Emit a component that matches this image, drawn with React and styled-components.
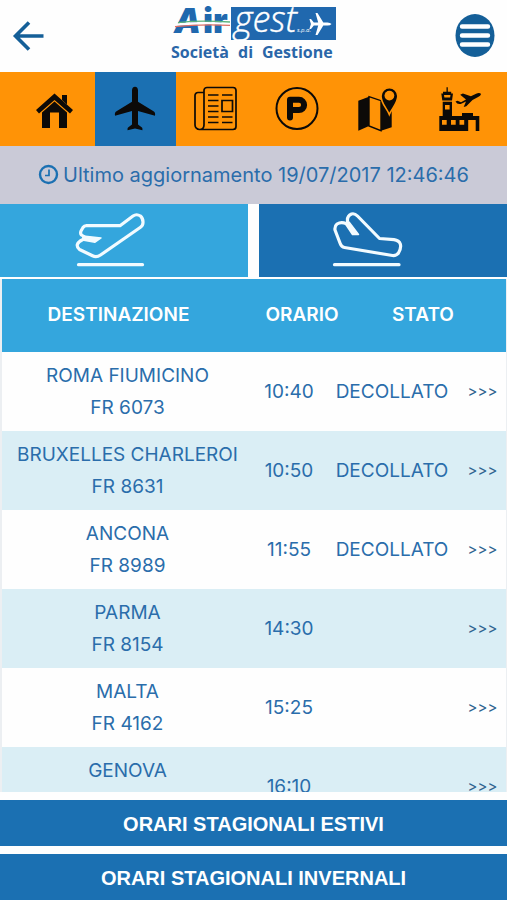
import React from "react";
import styled, { createGlobalStyle } from "styled-components";

const color = {
  blue: "#1b70b2",
  sky: "#34a6dd",
  orange: "#ff9306",
  ink: "#2a6dab",
  deep: "#145f98",
  stripe: "#daeef5",
};

const GlobalStyle = createGlobalStyle`
  *, *::before, *::after { box-sizing: border-box; }
  html, body { margin: 0; padding: 0; }
  body { background: #fefefe; font-family: Inter, "Open Sans", sans-serif; }
  button { font: inherit; border: 0; margin: 0; padding: 0; cursor: pointer; }
`;

const Page = styled.div`
  display: flex;
  flex-direction: column;
  height: 100vh;
  overflow: hidden;
`;

const Header = styled.header`
  flex: none;
  display: grid;
  grid-template-columns: 1fr auto 1fr;
  align-items: center;
  padding: 0 12px;
  height: 72px;
`;

const HeaderButton = styled.button`
  display: flex;
  justify-self: ${(p) => (p.$end ? "end" : "start")};
  background: none;
`;

const Logo = styled.svg`
  display: block;
  overflow: visible;
  font-family: "Open Sans", sans-serif;
`;

const Nav = styled.nav`
  flex: none;
  display: grid;
  grid-template-columns: repeat(6, 1fr);
  height: 74px;
  padding: 0 7px 0 14px;
  background: ${color.orange};
`;

const NavLink = styled.a`
  display: flex;
  align-items: center;
  justify-content: center;
  color: #0c0a08;
  background: ${(p) => (p.$active ? color.blue : "transparent")};
`;

const NavDrawing = styled.svg`
  overflow: visible;
`;

const Updated = styled.p`
  flex: none;
  display: flex;
  align-items: center;
  justify-content: center;
  gap: 4px;
  height: 58px;
  margin: 0;
  background: #cacad7;
  color: ${color.ink};
  font-size: 20px;
`;

const Tabs = styled.div`
  flex: none;
  display: grid;
  grid-template-columns: 1fr 1fr;
  gap: 11px;
  height: 73px;
`;

const Tab = styled.button`
  display: flex;
  align-items: center;
  justify-content: center;
  padding-right: ${(p) => (p.$active ? "26px" : "30px")};
  background: ${(p) => (p.$active ? color.sky : color.blue)};
`;

const Board = styled.div`
  flex: 1 1 0;
  min-height: 0;
  overflow-y: auto;
  scrollbar-width: none;
  margin-top: 2px;
  padding: 0 1px 0 2px;
  background: #eceff2;
`;

const Table = styled.table`
  display: block;
  width: 100%;
  color: ${color.ink};
  font-size: 19px;
  line-height: 32px;
`;

const TableHead = styled.thead`
  display: block;
  background: ${color.sky};
  color: #fff;
`;

const TableBody = styled.tbody`
  display: block;
`;

const HeadRow = styled.tr`
  display: grid;
  grid-template-columns: 233fr 134fr 108fr 29fr;
  align-items: center;
  height: 73px;
  padding-bottom: 2px;
`;

const HeadCell = styled.th`
  padding: 0;
  font-weight: 600;
  text-align: center;
`;

const FlightRow = styled.tr`
  display: grid;
  grid-template-columns: 251fr 72fr 134fr 47fr;
  align-items: center;
  height: 79px;
  background: #fefefe;

  &:nth-child(even) { background: ${color.stripe}; }
`;

const Cell = styled.td`
  padding: 0;
  text-align: center;
  white-space: nowrap;
`;

const Line = styled.span`
  display: block;
`;

const More = styled.a`
  color: #33658f;
  font-size: 15px;
  text-decoration: none;
`;

const Seasons = styled.footer`
  flex: none;
  display: grid;
  gap: 8px;
  padding-top: 8px;
`;

const SeasonButton = styled.button`
  height: 46px;
  padding-top: 2px;
  background: ${color.blue};
  color: #fff;
  font-family: "Liberation Sans", Arial, sans-serif;
  font-size: 20px;
  font-weight: 700;
`;

const BackIcon = () => (
  <svg width="32" height="32" viewBox="0 0 32 32" fill="none" stroke={color.deep} strokeWidth="3.6">
    <path d="M17 2.500 3.500 16 17 29.500M3.500 16H31.500" />
  </svg>
);

const MenuIcon = () => (
  <svg width="40" height="44" viewBox="0 0 40 44">
    <ellipse cx="20" cy="21.500" rx="19.500" ry="21.500" fill={color.deep} />
    <path d="M7 12.500H33M7 21.500H33M7 30.500H33" stroke="#fff" strokeWidth="4.400" strokeLinecap="round" />
  </svg>
);

const AirgestLogo = () => (
  <Logo width="168" height="62" viewBox="0 0 168 62" role="img" aria-label="Airgest Società di Gestione">
    <g fontFamily="Inter" fontWeight="900" fontSize="34" fill="#2068ae">
      <text x="4" y="28" fontStyle="italic">A</text>
      <text x="33" y="28">ir</text>
    </g>
    <path d="M7 18.200Q30 16.200 60 17.600V20Q30 18.600 5 21Z" fill="#fff" />
    <path d="M8 17.600Q30 15 60 17" fill="none" stroke="#5bb37c" strokeWidth="1.300" />
    <path d="M5 21.600Q30 19 60 20.400" fill="none" stroke="#dd6f66" strokeWidth="1.300" />
    <rect x="61" y="2" width="105" height="33" fill="#2068ae" />
    <text x="64" y="27" fontWeight="300" fontStyle="italic" fontSize="36" fill="#fff" stroke="#fff" strokeWidth="0.400">gest</text>
    <text x="127" y="27" fontSize="6" fontStyle="italic" fill="#fff">s.p.a.</text>
    <path
      fill="#fff"
      d="M161.500 19q-1.200-1.500-4-1.500h-4.200L147.500 8h-2l2.700 9.500h-4.400L141 14h-1.600l1.500 5-1.500 5h1.600l2.800-3.500h4.400L145.500 30h2l5.800-9.500h4.200q2.800 0 4-1.500Z"
    />
    <g fontWeight="700" fontSize="16" fill="#2a66a8">
      <text x="1" y="53">Società</text>
      <text x="68" y="53">di</text>
      <text x="92" y="53">Gestione</text>
    </g>
  </Logo>
);

const NavSvg = ({ children }) => (
  <NavDrawing width="44" height="46" viewBox="1 0 44 46" fill="currentColor" aria-hidden="true">
    {children}
  </NavDrawing>
);

const HomeIcon = () => (
  <NavSvg>
    <path d="M30 9h5v9.500l-5-4.500Z" />
    <path d="M22.500 7.500 41 24l-3 3.500L22.500 14 7 27.500 4 24Z" />
    <path d="M22.500 15.500 35 26.500V42h-8V26.500h-9V42H10V26.500Z" />
  </NavSvg>
);

const PlaneIcon = () => (
  <NavSvg>
    <path d="M22 .8c-1.900 0-3 1.500-3 3.800v11.200L3.500 25.200C2 26.200 1.600 27.400 2 29.800L19 25v13.500l-3.600 2.800c-.9.800-1 1.700-.8 3L22 42.500l7.400 1.800c.2-1.300.1-2.200-.8-3L25 38.500V25l17 4.800c.4-2.400 0-3.600-1.500-4.600L25 15.800V4.600C25 2.300 23.900.8 22 .8Z" />
  </NavSvg>
);

const NewsIcon = () => (
  <NavSvg>
    <g fill="none" stroke="currentColor" strokeWidth="1.700">
      <path d="M10 39V4.500a3 3 0 0 1 3-3h26a3 3 0 0 1 3 3v36a3 3 0 0 1-3 3H5.500a4.500 4.500 0 0 1-4.500-4.500V9.500a3 3 0 0 1 3-3h6v32.500q0 4.500-4.500 4.500" />
      <path d="M14 9h10.500M14 14.500h10.500M14 20h10.500M14 25.500h10.500M14 31h10.500M14 36.500h10.500M28 9h10.500M28 31h10.500M28 36.500h10.500" />
      <path d="M28 14.500h10.500v11H28Z" />
    </g>
  </NavSvg>
);

const ParkingIcon = () => (
  <NavSvg>
    <g fill="none" stroke="currentColor">
      <circle cx="22" cy="22.500" r="20.500" strokeWidth="2" />
      <path d="M15 31.500V13.800h9a5.100 5.100 0 0 1 0 10.200h-9" strokeWidth="6" strokeLinecap="round" strokeLinejoin="round" />
    </g>
  </NavSvg>
);

const MapIcon = () => (
  <NavSvg>
    <path d="M2.300 14.700 13 10.700V40L2.300 44.700Z" />
    <path d="M13 10.700 25 14.700V44.700L13 40Z" fill="none" stroke="currentColor" strokeWidth="1.400" />
    <path d="M25 14.700 35.700 11V41.300L25 44.700Z" />
    <path
      d="M33.300 28.500C31 22.500 25 17.500 25 10a8.400 8.400 0 0 1 16.800 0C41.800 17.500 35.600 22.500 33.300 28.500Z"
      stroke={color.orange}
      strokeWidth="1.600"
    />
    <circle cx="33.400" cy="9.600" r="4.900" fill={color.orange} />
  </NavSvg>
);

const TowerIcon = () => (
  <NavSvg>
    <path d="M9.500 1.300h1.300v4.500h3.400v1.700H16l-1 7H5.300l-1-7H6V5.800h3.500Z" />
    <path d="M5.700 15.800h9.300V30h10V27h11v3h6.300v15h-3.600V34h-7.500v11H2.300V30h3.400Z" />
    <g fill={color.orange}>
      <path d="M7 9h6.500l-.4 2.400H7.400Z" />
      <path d="M8 19h4.600v4.500H8ZM5 34h4.700v4.700H5ZM14 34h4.700v4.700H14ZM22.500 34h4.700v4.700h-4.700Z" />
    </g>
    <path d="m18.500 15.500 2-.8 3.500 1.600 5-2.700-5.800-4.800 2.700-1.300 8 2.800 5.200-2.500q3.400-1.500 5 .3-.5 1.800-3 3l-5.600 2.900-6.200 6.200-2.600.8 2.300-5.500-5.300 2.400q-3.500.8-5.200-2.400Z" />
  </NavSvg>
);

const TabSvg = ({ children }) => (
  <svg width="72" height="60" viewBox="0 0 72 60" fill="none" stroke="#f2fbff" strokeWidth="3.200" strokeLinejoin="round" strokeLinecap="round" aria-hidden="true">
    {children}
  </svg>
);

const TakeoffIcon = () => (
  <TabSvg>
    <path d="M9 25.500 6.500 24Q5 22.500 6 20L8 16.500Q9.200 14.700 11.500 14.700H45L58 5Q61.500 2.500 65.500 5Q68.200 7.500 68 11.500Q68 14.500 65.500 16.200L25.500 44Q21.500 46.800 17.500 44.800L4.500 38.500Q1.800 36.500 2.300 33.500Q3.500 30.500 7.500 28.800" />
    <path fill="#f2fbff" strokeWidth="1.500" d="M8 25 26 27 20 31.200 7.500 29Z" />
    <path d="M3.500 53.700H67.500" />
  </TabSvg>
);

const LandingIcon = () => (
  <TabSvg>
    <path d="M14 12.500Q9 10.500 5 13Q2.500 15 3 19L8.200 32.500Q9.500 36 12.500 36.500L60.500 44.500Q64.500 44.800 66.500 42Q69.500 37 68.300 33Q67 29.500 62 28.700L47.500 27.500 25.500 5Q22.500 2 19.500 3Q15 5 15.500 10" />
    <path fill="#f2fbff" strokeWidth="1.500" d="M13.500 13 17 11 26.500 23.500H20.500Z" />
    <path d="M2.500 53.700H67" />
  </TabSvg>
);

const ClockIcon = () => (
  <svg width="21" height="22" viewBox="0 0 21 22" fill="none" stroke={color.blue} strokeWidth="2.400" aria-hidden="true">
    <circle cx="10.500" cy="10.500" r="8.500" />
    <path d="M11 5.500v6H7" strokeWidth="1.700" />
  </svg>
);

const sections = [
  { label: "Home", href: "#home", Icon: HomeIcon },
  { label: "Voli", href: "#voli", Icon: PlaneIcon, active: true },
  { label: "News", href: "#news", Icon: NewsIcon },
  { label: "Parcheggi", href: "#parcheggi", Icon: ParkingIcon },
  { label: "Mappa", href: "#mappa", Icon: MapIcon },
  { label: "Aeroporto", href: "#aeroporto", Icon: TowerIcon },
];

const flights = [
  { city: "ROMA FIUMICINO", code: "FR 6073", time: "10:40", status: "DECOLLATO" },
  { city: "BRUXELLES CHARLEROI", code: "FR 8631", time: "10:50", status: "DECOLLATO" },
  { city: "ANCONA", code: "FR 8989", time: "11:55", status: "DECOLLATO" },
  { city: "PARMA", code: "FR 8154", time: "14:30", status: "" },
  { city: "MALTA", code: "FR 4162", time: "15:25", status: "" },
  { city: "GENOVA", code: "", time: "16:10", status: "" },
];

export default function App() {
  return (
    <Page>
      <GlobalStyle />
      <Header>
        <HeaderButton type="button" aria-label="Indietro"><BackIcon /></HeaderButton>
        <AirgestLogo />
        <HeaderButton type="button" aria-label="Menu" $end><MenuIcon /></HeaderButton>
      </Header>
      <Nav>
        {sections.map(({ label, href, Icon, active }) => (
          <NavLink key={label} href={href} aria-label={label} $active={active}>
            <Icon />
          </NavLink>
        ))}
      </Nav>
      <Updated>
        <ClockIcon />
        <span>Ultimo aggiornamento 19/07/2017 12:46:46</span>
      </Updated>
      <Tabs role="tablist">
        <Tab type="button" role="tab" aria-selected="true" aria-label="Partenze" $active><TakeoffIcon /></Tab>
        <Tab type="button" role="tab" aria-selected="false" aria-label="Arrivi"><LandingIcon /></Tab>
      </Tabs>
      <Board>
        <Table>
          <TableHead>
            <HeadRow>
              <HeadCell scope="col">DESTINAZIONE</HeadCell>
              <HeadCell scope="col">ORARIO</HeadCell>
              <HeadCell scope="col">STATO</HeadCell>
            </HeadRow>
          </TableHead>
          <TableBody>
            {flights.map((f) => (
              <FlightRow key={f.city}>
                <Cell>
                  <Line>{f.city}</Line>
                  <Line>{f.code || "\u00a0"}</Line>
                </Cell>
                <Cell>{f.time}</Cell>
                <Cell>{f.status}</Cell>
                <Cell><More href="#dettagli">&gt;&gt;&gt;</More></Cell>
              </FlightRow>
            ))}
          </TableBody>
        </Table>
      </Board>
      <Seasons>
        <SeasonButton type="button">ORARI STAGIONALI ESTIVI</SeasonButton>
        <SeasonButton type="button">ORARI STAGIONALI INVERNALI</SeasonButton>
      </Seasons>
    </Page>
  );
}
